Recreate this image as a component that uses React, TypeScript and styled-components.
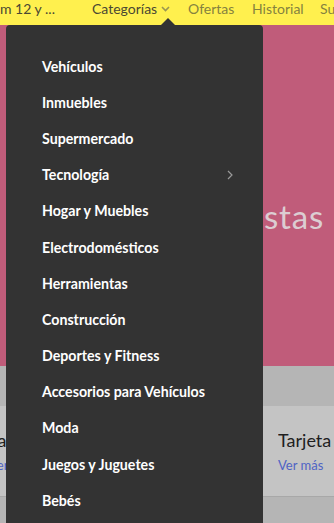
import React from "react";
import styled, { createGlobalStyle } from "styled-components";

const Global = createGlobalStyle`
  html, body { margin: 0; padding: 0; }
  body { width: 334px; height: 523px; overflow: hidden; font-family: Lato, "Open Sans", Arial, sans-serif; background: #b5b5b5; }
`;

const Page = styled.div`
  position: relative;
  width: 334px;
  height: 523px;
  overflow: hidden;
  display: flex;
  flex-direction: column;
`;

const Header = styled.header`
  height: 25px;
  flex: none;
  background: #fff04e;
  display: flex;
  align-items: flex-start;
  padding-top: 1px;
  box-sizing: border-box;
`;

const NavRow = styled.nav`
  height: 15px;
  display: flex;
  align-items: center;
  white-space: nowrap;
  font-family: Lato, Arial, sans-serif;
  font-size: 14px;
  line-height: 15px;
`;

const NavItem = styled.span<{ $dark?: boolean; $w?: number }>`
  color: ${(p) => (p.$dark ? "#4a4833" : "#85823f")};
  width: ${(p) => (p.$w ? `${p.$w}px` : "auto")};
  flex: none;
  display: inline-flex;
  align-items: center;
  gap: 4px;
`;

const Banner = styled.section`
  height: 341px;
  flex: none;
  background: #c05c7a;
  display: flex;
  align-items: center;
  justify-content: flex-end;
  padding-top: 40px;
  box-sizing: border-box;
`;

const BannerText = styled.span`
  font-family: Lato, Arial, sans-serif;
  font-size: 33px;
  color: #dccdd2;
  margin-right: 10px;
  letter-spacing: 0.8px;
`;

const Strip = styled.div`
  height: 40px;
  flex: none;
  background: #b5b5b5;
`;

const CardRow = styled.div`
  height: 90px;
  flex: none;
  display: flex;
  background: #c4c4c4;
  border-bottom: 1px solid #a8a8a8;
`;

const Card = styled.div<{ $w: number }>`
  width: ${(p) => p.$w}px;
  flex: none;
  display: flex;
  flex-direction: column;
  justify-content: center;
  gap: 5px;
  overflow: hidden;
`;

const CardTitle = styled.span`
  font-family: Lato, Arial, sans-serif;
  font-size: 18px;
  color: #1e1e1e;
  line-height: 22px;
  white-space: nowrap;
`;

const CardLink = styled.span`
  font-family: Lato, Arial, sans-serif;
  font-size: 13px;
  color: #4f63c4;
  line-height: 18px;
  white-space: nowrap;
`;

const LeftCard = styled(Card)`
  margin-left: -11px;
`;

const Dropdown = styled.div`
  position: absolute;
  top: 25px;
  left: 6px;
  width: 257px;
  height: 520px;
  background: #333333;
  border-radius: 4px 4px 0 0;
  padding-top: 23px;
  box-sizing: border-box;
  &::before {
    content: "";
    position: absolute;
    top: -7px;
    left: 155px;
    border-left: 7px solid transparent;
    border-right: 7px solid transparent;
    border-bottom: 7px solid #333333;
  }
`;

const MenuList = styled.ul`
  list-style: none;
  margin: 0;
  padding: 0;
`;

const MenuItem = styled.li`
  height: 36.2px;
  display: flex;
  align-items: center;
  justify-content: space-between;
  padding: 0 30px 0 36px;
  font-family: Lato, Arial, sans-serif;
  font-weight: 700;
  font-size: 14.2px;
  color: #ffffff;
`;

const items = [
  "Vehículos",
  "Inmuebles",
  "Supermercado",
  "Tecnología",
  "Hogar y Muebles",
  "Electrodomésticos",
  "Herramientas",
  "Construcción",
  "Deportes y Fitness",
  "Accesorios para Vehículos",
  "Moda",
  "Juegos y Juguetes",
  "Bebés",
];

const Chevron = ({ color, dir }: { color: string; dir: "down" | "right" }) =>
  dir === "down" ? (
    <svg width="9" height="6" viewBox="0 0 9 6">
      <path d="M1 1l3.5 3.5L8 1" fill="none" stroke={color} strokeWidth="1.6" />
    </svg>
  ) : (
    <svg width="6" height="10" viewBox="0 0 6 10">
      <path d="M1 1l4 4-4 4" fill="none" stroke={color} strokeWidth="1.2" />
    </svg>
  );

export default function App() {
  return (
    <>
      <Global />
      <Page>
        <Header>
          <NavRow>
            <NavItem $dark $w={92}>m 12 y ...</NavItem>
            <NavItem $dark $w={96}>
              Categorías <Chevron color="#9a9650" dir="down" />
            </NavItem>
            <NavItem $w={64}>Ofertas</NavItem>
            <NavItem $w={68}>Historial</NavItem>
            <NavItem>Su</NavItem>
          </NavRow>
        </Header>
        <Banner>
          <BannerText>stas</BannerText>
        </Banner>
        <Strip />
        <CardRow>
          <LeftCard $w={289}>
            <CardTitle>Tarjeta</CardTitle>
            <CardLink>Ver más</CardLink>
          </LeftCard>
          <Card $w={120}>
            <CardTitle>Tarjeta</CardTitle>
            <CardLink>Ver más</CardLink>
          </Card>
        </CardRow>
        <Strip />
        <Dropdown>
          <MenuList>
            {items.map((it) => (
              <MenuItem key={it}>
                <span>{it}</span>
                {it === "Tecnología" && <Chevron color="#9a9a9a" dir="right" />}
              </MenuItem>
            ))}
          </MenuList>
        </Dropdown>
      </Page>
    </>
  );
}
